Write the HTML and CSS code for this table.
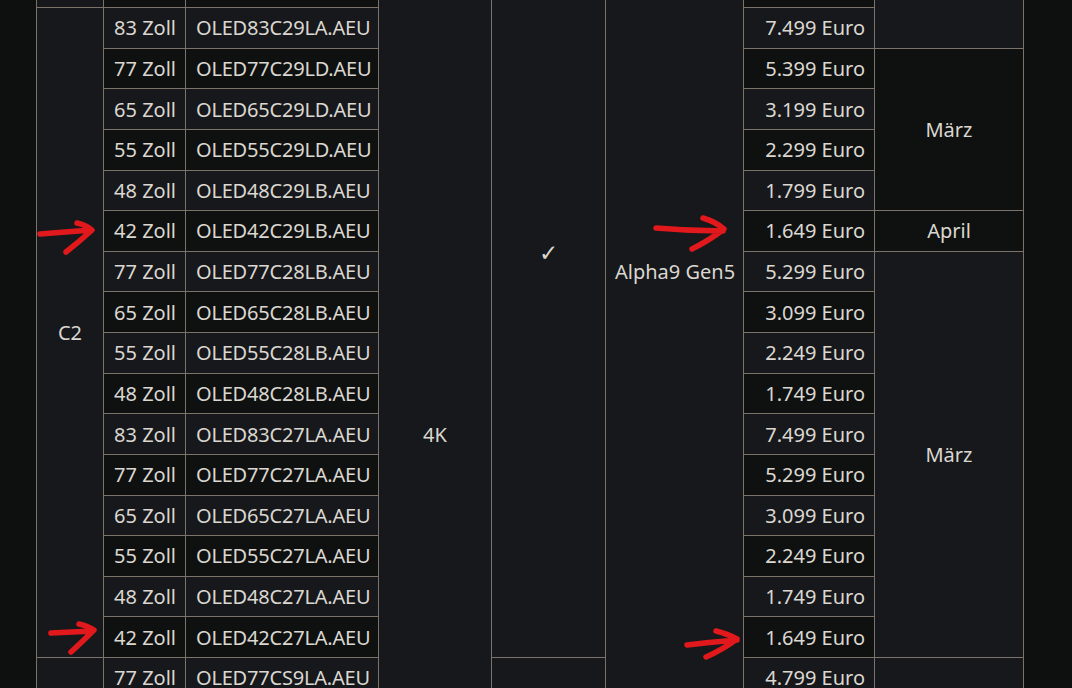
FILE: index.html
```html
<!DOCTYPE html>
<html>
<head>
<meta charset="utf-8">
<title>LG OLED 2022</title>
<link rel="stylesheet" href="styles.css">
</head>
<body>
<div class="sheet">
    <table class="models">
        <colgroup>
            <col class="c-series">
            <col class="c-size">
            <col class="c-model">
            <col class="c-res">
            <col class="c-hdmi">
            <col class="c-cpu">
            <col class="c-price">
            <col class="c-month">
        </colgroup>
        <tbody>
            <tr>
                <td rowspan="4">G2</td>
                <td class="num">77 Zoll</td><td class="model">OLED77G29LA.AEU</td>
                <td rowspan="29">4K</td>
                <td rowspan="20" class="check">✓</td>
                <td rowspan="21">Alpha9 Gen5</td>
                <td class="num">4.499 Euro</td>
                <td rowspan="5">Februar</td>
            </tr>
            <tr><td class="num">65 Zoll</td><td class="model">OLED65G29LA.AEU</td><td class="num">3.299 Euro</td></tr>
            <tr><td class="num">55 Zoll</td><td class="model">OLED55G29LA.AEU</td><td class="num">2.499 Euro</td></tr>
            <tr><td class="num">55 Zoll</td><td class="model">OLED55G28LC.AEU</td><td class="num">2.499 Euro</td></tr>
            <tr>
                <td rowspan="16">C2</td>
                <td class="num">83 Zoll</td><td class="model">OLED83C29LA.AEU</td><td class="num">7.499 Euro</td>
            </tr>
            <tr><td class="num">77 Zoll</td><td class="model">OLED77C29LD.AEU</td><td class="num">5.399 Euro</td><td rowspan="4">März</td></tr>
            <tr><td class="num">65 Zoll</td><td class="model">OLED65C29LD.AEU</td><td class="num">3.199 Euro</td></tr>
            <tr><td class="num">55 Zoll</td><td class="model">OLED55C29LD.AEU</td><td class="num">2.299 Euro</td></tr>
            <tr><td class="num">48 Zoll</td><td class="model">OLED48C29LB.AEU</td><td class="num">1.799 Euro</td></tr>
            <tr><td class="num">42 Zoll</td><td class="model">OLED42C29LB.AEU</td><td class="num">1.649 Euro</td><td>April</td></tr>
            <tr><td class="num">77 Zoll</td><td class="model">OLED77C28LB.AEU</td><td class="num">5.299 Euro</td><td rowspan="10">März</td></tr>
            <tr><td class="num">65 Zoll</td><td class="model">OLED65C28LB.AEU</td><td class="num">3.099 Euro</td></tr>
            <tr><td class="num">55 Zoll</td><td class="model">OLED55C28LB.AEU</td><td class="num">2.249 Euro</td></tr>
            <tr><td class="num">48 Zoll</td><td class="model">OLED48C28LB.AEU</td><td class="num">1.749 Euro</td></tr>
            <tr><td class="num">83 Zoll</td><td class="model">OLED83C27LA.AEU</td><td class="num">7.499 Euro</td></tr>
            <tr><td class="num">77 Zoll</td><td class="model">OLED77C27LA.AEU</td><td class="num">5.299 Euro</td></tr>
            <tr><td class="num">65 Zoll</td><td class="model">OLED65C27LA.AEU</td><td class="num">3.099 Euro</td></tr>
            <tr><td class="num">55 Zoll</td><td class="model">OLED55C27LA.AEU</td><td class="num">2.249 Euro</td></tr>
            <tr><td class="num">48 Zoll</td><td class="model">OLED48C27LA.AEU</td><td class="num">1.749 Euro</td></tr>
            <tr><td class="num">42 Zoll</td><td class="model">OLED42C27LA.AEU</td><td class="num">1.649 Euro</td></tr>
            <tr>
                <td rowspan="2">CS</td>
                <td class="num">77 Zoll</td><td class="model">OLED77CS9LA.AEU</td>
                <td rowspan="9" class="check">✓</td>
                <td class="num">4.799 Euro</td>
                <td rowspan="9">April</td>
            </tr>
            <tr><td class="num">65 Zoll</td><td class="model">OLED65CS9LA.AEU</td><td rowspan="8">Alpha7 Gen5</td><td class="num">2.999 Euro</td></tr>
            <tr><td rowspan="7">B2</td><td class="num">77 Zoll</td><td class="model">OLED77B29LA.AEU</td><td class="num">4.499 Euro</td></tr>
            <tr><td class="num">65 Zoll</td><td class="model">OLED65B29LA.AEU</td><td class="num">2.599 Euro</td></tr>
            <tr><td class="num">55 Zoll</td><td class="model">OLED55B29LA.AEU</td><td class="num">1.899 Euro</td></tr>
            <tr><td class="num">77 Zoll</td><td class="model">OLED77B23LA.AEU</td><td class="num">4.299 Euro</td></tr>
            <tr><td class="num">65 Zoll</td><td class="model">OLED65B23LA.AEU</td><td class="num">2.499 Euro</td></tr>
            <tr><td class="num">55 Zoll</td><td class="model">OLED55B23LA.AEU</td><td class="num">1.799 Euro</td></tr>
            <tr><td class="num">55 Zoll</td><td class="model">OLED55B26LA.AEU</td><td class="num">1.799 Euro</td></tr>
        </tbody>
    </table>

    <svg class="marks" width="1072" height="688" viewBox="0 0 1072 688">
        <path d="M40 234 Q65 232 91 230 M77 223 Q86 225 92 230 Q80 241 66 252"/>
        <path d="M656 228 Q690 231 723 231 M703 218 Q716 222 724 229 Q710 240 692 249"/>
        <path d="M51 633 Q72 632 93 631 M79 624 Q88 626 94 630 Q82 642 71 652"/>
        <path d="M687 645 Q712 642 737 640 M716 631 Q728 634 737 639 Q722 650 706 657"/>
    </svg>
</div>
</body>
</html>
```

FILE: styles.css
```css
html {
    overflow: hidden;
}

body {
    margin: 0;
    background-color: #0e0f0f;
    color: #dbd7d1;
    font-family: "Noto Sans", "Open Sans", sans-serif;
    font-size: 20px;
}

.sheet {
    position: relative;
    display: flow-root;
    height: 688px;
    overflow: hidden;
    padding-left: 36px;
}

.models {
    border-collapse: collapse;
    table-layout: fixed;
    width: 988px;
    margin-top: -155.5px;
}

.c-series { width: 67px; }
.c-size { width: 82px; }
.c-model { width: 193px; }
.c-res { width: 113px; }
.c-hdmi { width: 114px; }
.c-cpu { width: 138px; }
.c-price { width: 131px; }
.c-month { width: 149px; }

.models td {
    border: 1px solid #7b7269;
    padding: 1px 9px 0;
    height: 38.625px;
    line-height: 24px;
    text-align: center;
    white-space: nowrap;
    overflow: hidden;
}

.models tr:nth-child(odd) td {
    background-color: #17181b;
}

.models tr:nth-child(even) td {
    background-color: #0f1110;
}

.models td.num {
    text-align: right;
}

.models td.model {
    text-align: left;
    padding-left: 10px;
    letter-spacing: -0.2px;
}

.models td.check {
    font-size: 23px;
}

.marks {
    position: absolute;
    top: 0;
    left: 0;
    pointer-events: none;
    fill: none;
    stroke: #e2191c;
    stroke-width: 5.5;
    stroke-linecap: round;
    stroke-linejoin: round;
}
```
